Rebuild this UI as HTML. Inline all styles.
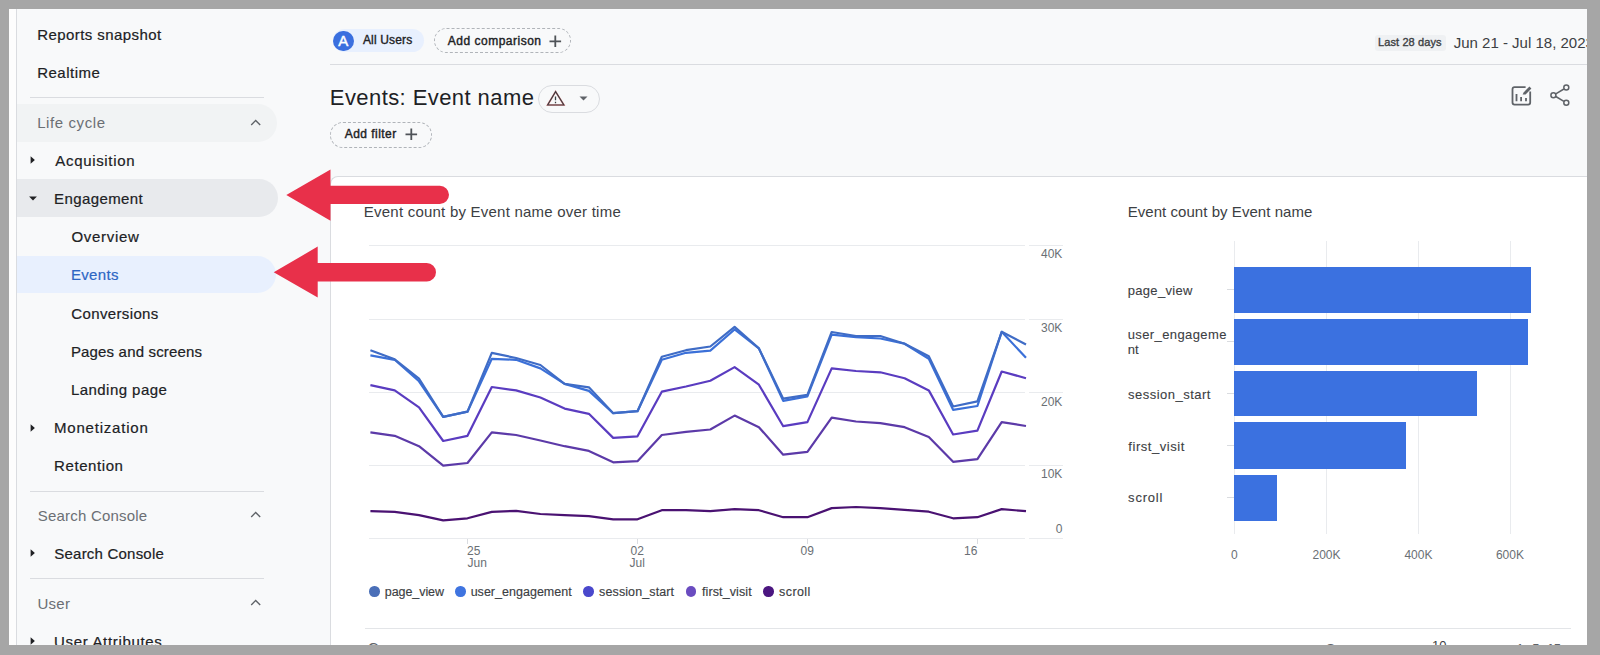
<!DOCTYPE html>
<html><head><meta charset="utf-8"><style>
html,body{margin:0;padding:0;}
body{width:1600px;height:655px;position:relative;overflow:hidden;background:#a6a6a6;font-family:"Liberation Sans",sans-serif;}
.t{position:absolute;line-height:1;white-space:nowrap;-webkit-font-smoothing:antialiased;}
.r{position:absolute;}
</style></head><body>
<div class="r" style="left:9.00px;top:9.00px;width:1578.00px;height:636.00px;background:#f8f9fa;"></div>
<div class="r" style="left:9.00px;top:9.00px;width:7.00px;height:636.00px;background:#fdfdfd;"></div>
<div class="r" style="left:16.00px;top:9.00px;width:1.00px;height:636.00px;background:#dadce0;"></div>
<div class="t" style="left:37.20px;top:26.50px;font-size:15px;color:#202124;font-weight:400;letter-spacing:0.43px;-webkit-text-stroke:0.2px #202124;">Reports snapshot</div>
<div class="t" style="left:37.20px;top:64.70px;font-size:15px;color:#202124;font-weight:400;letter-spacing:0.486px;-webkit-text-stroke:0.2px #202124;">Realtime</div>
<div class="r" style="left:30.00px;top:97.00px;width:234.00px;height:1.00px;background:#dadce0;"></div>
<div class="r" style="left:17.00px;top:104.00px;width:260.00px;height:38.00px;background:#f1f3f4;border-radius:0 19px 19px 0;"></div>
<div class="t" style="left:37.20px;top:115.00px;font-size:15px;color:#6b6f74;font-weight:400;letter-spacing:0.589px;">Life cycle</div>
<svg class="r" style="left:248.5px;top:117.5px" width="14" height="10" viewBox="0 0 14 10"><path d="M2.2 6.9 L6.7 2.4 L11.2 6.9" fill="none" stroke="#5f6368" stroke-width="1.4"/></svg>
<svg class="r" style="left:30.1px;top:154.7px" width="6" height="10" viewBox="0 0 6 10"><path d="M0.6 1.2 L4.9 5 L0.6 8.8Z" fill="#202124"/></svg>
<div class="t" style="left:55.30px;top:153.30px;font-size:15px;color:#202124;font-weight:400;letter-spacing:0.665px;-webkit-text-stroke:0.2px #202124;">Acquisition</div>
<div class="r" style="left:17.00px;top:179.30px;width:261.00px;height:37.70px;background:#e8eaed;border-radius:0 19px 19px 0;"></div>
<svg class="r" style="left:28.5px;top:196.2px" width="8" height="5" viewBox="0 0 8 5"><path d="M0.1 0.5 L7.9 0.5 L4 4.5Z" fill="#202124"/></svg>
<div class="t" style="left:54.10px;top:190.80px;font-size:15px;color:#202124;font-weight:400;letter-spacing:0.4px;-webkit-text-stroke:0.2px #202124;">Engagement</div>
<div class="t" style="left:71.50px;top:229.10px;font-size:15px;color:#202124;font-weight:400;letter-spacing:0.7px;-webkit-text-stroke:0.2px #202124;">Overview</div>
<div class="r" style="left:17.00px;top:256.30px;width:259.00px;height:37.10px;background:#e8f0fe;border-radius:0 19px 19px 0;"></div>
<div class="t" style="left:70.90px;top:267.40px;font-size:15px;color:#2d66c4;font-weight:400;letter-spacing:0.35px;-webkit-text-stroke:0.2px #2d66c4;">Events</div>
<div class="t" style="left:71.35px;top:305.90px;font-size:15px;color:#202124;font-weight:400;letter-spacing:0.36px;-webkit-text-stroke:0.2px #202124;">Conversions</div>
<div class="t" style="left:70.90px;top:343.50px;font-size:15px;color:#202124;font-weight:400;letter-spacing:0.172px;-webkit-text-stroke:0.2px #202124;">Pages and screens</div>
<div class="t" style="left:70.90px;top:381.60px;font-size:15px;color:#202124;font-weight:400;letter-spacing:0.459px;-webkit-text-stroke:0.2px #202124;">Landing page</div>
<svg class="r" style="left:30.1px;top:422.6px" width="6" height="10" viewBox="0 0 6 10"><path d="M0.6 1.2 L4.9 5 L0.6 8.8Z" fill="#202124"/></svg>
<div class="t" style="left:54.10px;top:419.70px;font-size:15px;color:#202124;font-weight:400;letter-spacing:0.782px;-webkit-text-stroke:0.2px #202124;">Monetization</div>
<div class="t" style="left:54.10px;top:457.80px;font-size:15px;color:#202124;font-weight:400;letter-spacing:0.581px;-webkit-text-stroke:0.2px #202124;">Retention</div>
<div class="r" style="left:30.00px;top:491.00px;width:234.00px;height:1.00px;background:#dadce0;"></div>
<div class="t" style="left:37.75px;top:507.90px;font-size:15px;color:#6b6f74;font-weight:400;letter-spacing:0.208px;">Search Console</div>
<svg class="r" style="left:248.5px;top:510.20000000000005px" width="14" height="10" viewBox="0 0 14 10"><path d="M2.2 6.9 L6.7 2.4 L11.2 6.9" fill="none" stroke="#5f6368" stroke-width="1.4"/></svg>
<svg class="r" style="left:30.1px;top:548.4px" width="6" height="10" viewBox="0 0 6 10"><path d="M0.6 1.2 L4.9 5 L0.6 8.8Z" fill="#202124"/></svg>
<div class="t" style="left:54.35px;top:546.10px;font-size:15px;color:#202124;font-weight:400;letter-spacing:0.208px;-webkit-text-stroke:0.2px #202124;">Search Console</div>
<div class="r" style="left:30.00px;top:578.00px;width:234.00px;height:1.00px;background:#dadce0;"></div>
<div class="t" style="left:37.45px;top:595.50px;font-size:15px;color:#6b6f74;font-weight:400;letter-spacing:0.283px;">User</div>
<svg class="r" style="left:248.5px;top:598.3px" width="14" height="10" viewBox="0 0 14 10"><path d="M2.2 6.9 L6.7 2.4 L11.2 6.9" fill="none" stroke="#5f6368" stroke-width="1.4"/></svg>
<svg class="r" style="left:30.1px;top:635.8px" width="6" height="10" viewBox="0 0 6 10"><path d="M0.6 1.2 L4.9 5 L0.6 8.8Z" fill="#202124"/></svg>
<div class="t" style="left:54.05px;top:633.50px;font-size:15px;color:#202124;font-weight:400;letter-spacing:0.671px;-webkit-text-stroke:0.2px #202124;">User Attributes</div>
<div class="r" style="left:333.00px;top:28.80px;width:91.00px;height:23.60px;background:#e8f0fe;border-radius:12px;"></div>
<div class="r" style="left:333.00px;top:30.60px;width:20.50px;height:20.50px;background:#3a6fdf;border-radius:50%;"></div>
<div class="t" style="left:143.25px;width:400px;text-align:center;top:33.00px;font-size:15px;color:#ffffff;font-weight:400;letter-spacing:0px;-webkit-text-stroke:0.45px #ffffff;">A</div>
<div class="t" style="left:362.90px;top:34.34px;font-size:12px;color:#202124;font-weight:400;letter-spacing:0.17px;-webkit-text-stroke:0.35px #202124;">All Users</div>
<div class="r" style="left:433.80px;top:28.40px;width:137.30px;height:24.80px;background:transparent;border:1px dashed #b0b4b9;border-radius:13px;box-sizing:border-box;"></div>
<div class="t" style="left:447.80px;top:34.84px;font-size:12px;color:#202124;font-weight:400;letter-spacing:0.498px;-webkit-text-stroke:0.4px #202124;">Add comparison</div>
<svg class="r" style="left:549.2px;top:34.6px" width="12.6" height="12.6" viewBox="0 0 12.6 12.6"><path d="M6.3 0.5 V12.1 M0.5 6.3 H12.1" stroke="#4f5358" stroke-width="1.8" fill="none"/></svg>
<div class="r" style="left:330.00px;top:64.00px;width:1257.00px;height:1.00px;background:#dadce0;"></div>
<div class="r" style="left:1375.20px;top:35.30px;width:70.40px;height:15.80px;background:#eff1f3;border-radius:3px;"></div>
<div class="t" style="left:1378.02px;top:36.99px;font-size:11px;color:#3c4043;font-weight:400;letter-spacing:0.104px;-webkit-text-stroke:0.35px #3c4043;">Last 28 days</div>
<div class="t" style="left:1453.75px;top:35.00px;font-size:15px;color:#3c4043;font-weight:400;letter-spacing:0.0px;">Jun 21 - Jul 18, 2023</div>
<div class="t" style="left:329.84px;top:87.28px;font-size:22px;color:#202124;font-weight:400;letter-spacing:0.421px;">Events: Event name</div>
<div class="r" style="left:538.00px;top:85.30px;width:62.30px;height:28.10px;background:transparent;border:1px solid #dadce0;border-radius:14px;box-sizing:border-box;"></div>
<svg class="r" style="left:545px;top:89px" width="22" height="19" viewBox="0 0 22 19"><path d="M10.6 2.6 L18.9 16 L2.6 16 Z" fill="none" stroke="#e05a5a" stroke-width="1.7" stroke-linejoin="miter" opacity="0.7"/><path d="M10.6 2.6 L18.9 16 L2.6 16 Z" fill="none" stroke="#3c3c40" stroke-width="1.1" stroke-linejoin="miter"/><path d="M10.5 7.5 V11.3 M10.5 12.8 V14.2" stroke="#3c4043" stroke-width="1.3"/></svg>
<svg class="r" style="left:579px;top:96px" width="9" height="5" viewBox="0 0 9 5"><path d="M0.5 0.5 L8.5 0.5 L4.5 4.5Z" fill="#5f6368"/></svg>
<div class="r" style="left:330.30px;top:121.90px;width:101.70px;height:26.20px;background:transparent;border:1px dashed #b0b4b9;border-radius:13px;box-sizing:border-box;"></div>
<div class="t" style="left:344.80px;top:128.24px;font-size:12px;color:#202124;font-weight:400;letter-spacing:0.449px;-webkit-text-stroke:0.4px #202124;">Add filter</div>
<svg class="r" style="left:405.09999999999997px;top:128.2px" width="12.6" height="12.6" viewBox="0 0 12.6 12.6"><path d="M6.3 0.5 V12.1 M0.5 6.3 H12.1" stroke="#4f5358" stroke-width="1.8" fill="none"/></svg>
<svg class="r" style="left:1508px;top:83px" width="28" height="26" viewBox="0 0 28 26"><path d="M17.6 4.2 H6.5 Q4.5 4.2 4.5 6.2 V19.6 Q4.5 21.6 6.5 21.6 H20.2 Q22.2 21.6 22.2 19.6 V8.5" fill="none" stroke="#5f6368" stroke-width="1.8"/><path d="M14.6 11.6 L15.6 9.4 L21.4 3.6 L23.4 5.6 L17.6 11.4 Z" fill="#5f6368"/><path d="M8.5 10.9 V18.3 M13.1 14 V18.3 M18 14.9 V18.3" stroke="#5f6368" stroke-width="1.8"/></svg>
<svg class="r" style="left:1547px;top:82px" width="26" height="26" viewBox="0 0 26 26"><path d="M8.8 11.9 L16.9 7 M8.8 14.5 L16.9 19.3" stroke="#5f6368" stroke-width="1.5"/><circle cx="19.3" cy="5.5" r="2.5" fill="none" stroke="#5f6368" stroke-width="1.5"/><circle cx="6.4" cy="13.2" r="2.5" fill="none" stroke="#5f6368" stroke-width="1.5"/><circle cx="19.3" cy="20.8" r="2.5" fill="none" stroke="#5f6368" stroke-width="1.5"/></svg>
<div class="r" style="left:330.00px;top:176.00px;width:1270.00px;height:479.00px;background:#ffffff;border-top:1px solid #dadce0;border-left:1px solid #dadce0;border-top-left-radius:8px;box-sizing:border-box;"></div>
<div class="t" style="left:363.80px;top:203.90px;font-size:15px;color:#3c4043;font-weight:400;letter-spacing:0.225px;">Event count by Event name over time</div>
<div class="r" style="left:369.00px;top:244.60px;width:656.00px;height:1.00px;background:#e9ebee;"></div>
<div class="r" style="left:1029.00px;top:244.60px;width:34.00px;height:1.00px;background:#e9ebee;"></div>
<div class="r" style="left:369.00px;top:318.50px;width:656.00px;height:1.00px;background:#e9ebee;"></div>
<div class="r" style="left:1029.00px;top:318.50px;width:34.00px;height:1.00px;background:#e9ebee;"></div>
<div class="r" style="left:369.00px;top:391.70px;width:656.00px;height:1.00px;background:#e9ebee;"></div>
<div class="r" style="left:1029.00px;top:391.70px;width:34.00px;height:1.00px;background:#e9ebee;"></div>
<div class="r" style="left:369.00px;top:464.80px;width:656.00px;height:1.00px;background:#e9ebee;"></div>
<div class="r" style="left:1029.00px;top:464.80px;width:34.00px;height:1.00px;background:#e9ebee;"></div>
<div class="r" style="left:369.00px;top:537.80px;width:656.00px;height:1.00px;background:#e9ebee;"></div>
<div class="r" style="left:1029.00px;top:537.80px;width:34.00px;height:1.00px;background:#e9ebee;"></div>
<div class="t" style="right:537.70px;top:248.34px;font-size:12px;color:#6a6f74;font-weight:400;letter-spacing:0px;">40K</div>
<div class="t" style="right:537.70px;top:322.34px;font-size:12px;color:#6a6f74;font-weight:400;letter-spacing:0px;">30K</div>
<div class="t" style="right:537.70px;top:395.54px;font-size:12px;color:#6a6f74;font-weight:400;letter-spacing:0px;">20K</div>
<div class="t" style="right:537.70px;top:467.64px;font-size:12px;color:#6a6f74;font-weight:400;letter-spacing:0px;">10K</div>
<div class="t" style="right:537.70px;top:523.44px;font-size:12px;color:#6a6f74;font-weight:400;letter-spacing:0px;">0</div>
<div class="r" style="left:467.10px;top:538.50px;width:1.00px;height:5.00px;background:#dadce0;"></div>
<div class="r" style="left:636.80px;top:538.50px;width:1.00px;height:5.00px;background:#dadce0;"></div>
<div class="r" style="left:806.90px;top:538.50px;width:1.00px;height:5.00px;background:#dadce0;"></div>
<div class="r" style="left:976.60px;top:538.50px;width:1.00px;height:5.00px;background:#dadce0;"></div>
<div class="t" style="left:467.10px;top:544.64px;font-size:12px;color:#6a6f74;font-weight:400;letter-spacing:0px;">25</div>
<div class="t" style="left:467.58px;top:557.24px;font-size:12px;color:#6a6f74;font-weight:400;letter-spacing:0px;">Jun</div>
<div class="t" style="left:437.20px;width:400px;text-align:center;top:544.64px;font-size:12px;color:#6a6f74;font-weight:400;letter-spacing:0px;">02</div>
<div class="t" style="left:437.20px;width:400px;text-align:center;top:557.24px;font-size:12px;color:#6a6f74;font-weight:400;letter-spacing:0px;">Jul</div>
<div class="t" style="left:607.30px;width:400px;text-align:center;top:544.64px;font-size:12px;color:#6a6f74;font-weight:400;letter-spacing:0px;">09</div>
<div class="t" style="right:622.70px;top:544.64px;font-size:12px;color:#6a6f74;font-weight:400;letter-spacing:0px;">16</div>
<svg class="r" style="left:0;top:0" width="1600" height="655" viewBox="0 0 1600 655"><polyline points="370.4,511.2 394.7,511.9 419.0,515.1 443.2,520.4 467.5,518.3 491.8,511.9 516.1,510.8 540.4,514.0 564.6,515.1 588.9,516.1 613.2,519.3 637.5,519.3 661.8,510.2 686.0,510.2 710.3,511.2 734.6,509.1 758.9,510.2 783.2,517.2 807.4,517.2 831.7,508.1 856.0,507.0 880.3,508.1 904.6,509.8 928.8,511.7 953.1,518.3 977.4,517.2 1001.7,509.1 1026.0,511.2" fill="none" stroke="#4a1272" stroke-width="2.2" stroke-linejoin="round"/><polyline points="370.4,432.4 394.7,435.8 419.0,446.2 443.2,465.6 467.5,463.0 491.8,432.4 516.1,435.0 540.4,440.5 564.6,446.2 588.9,450.9 613.2,462.3 637.5,461.2 661.8,435.0 686.0,431.9 710.3,429.5 734.6,415.6 758.9,427.2 783.2,454.7 807.4,451.9 831.7,417.7 856.0,421.5 880.3,423.1 904.6,427.2 928.8,437.1 953.1,461.8 977.4,459.2 1001.7,422.1 1026.0,426.0" fill="none" stroke="#5c3aa8" stroke-width="2.2" stroke-linejoin="round"/><polyline points="370.4,385.2 394.7,390.4 419.0,407.3 443.2,441.0 467.5,435.8 491.8,387.0 516.1,390.4 540.4,397.5 564.6,408.6 588.9,413.8 613.2,437.9 637.5,436.3 661.8,391.7 686.0,386.5 710.3,380.7 734.6,367.1 758.9,384.7 783.2,426.2 807.4,422.1 831.7,368.4 856.0,371.0 880.3,372.3 904.6,378.2 928.8,390.4 953.1,434.5 977.4,430.6 1001.7,371.5 1026.0,378.2" fill="none" stroke="#5a3cc0" stroke-width="2.2" stroke-linejoin="round"/><polyline points="370.4,355.4 394.7,359.8 419.0,381.3 443.2,416.9 467.5,411.7 491.8,358.8 516.1,359.8 540.4,368.4 564.6,383.9 588.9,390.9 613.2,413.2 637.5,411.2 661.8,359.8 686.0,352.8 710.3,350.6 734.6,329.5 758.9,348.4 783.2,400.8 807.4,396.4 831.7,334.6 856.0,337.2 880.3,338.5 904.6,343.7 928.8,358.8 953.1,409.9 977.4,406.0 1001.7,331.8 1026.0,357.8" fill="none" stroke="#3b70d8" stroke-width="2.2" stroke-linejoin="round"/><polyline points="370.4,350.2 394.7,359.3 419.0,378.7 443.2,416.9 467.5,411.7 491.8,352.8 516.1,358.0 540.4,365.0 564.6,383.9 588.9,387.3 613.2,413.2 637.5,411.2 661.8,356.7 686.0,350.2 710.3,346.5 734.6,326.9 758.9,348.4 783.2,398.7 807.4,394.8 831.7,332.0 856.0,336.0 880.3,336.0 904.6,343.7 928.8,356.2 953.1,406.5 977.4,401.3 1001.7,331.8 1026.0,344.4" fill="none" stroke="#3f6cc6" stroke-width="2.2" stroke-linejoin="round"/></svg>
<div class="r" style="left:369.30px;top:586.40px;width:10.40px;height:10.40px;background:#4a6fb8;border-radius:50%;"></div>
<div class="t" style="left:384.85px;top:585.62px;font-size:12.5px;color:#3c4043;font-weight:400;letter-spacing:-0.078px;-webkit-text-stroke:0.15px #3c4043;">page_view</div>
<div class="r" style="left:455.40px;top:586.40px;width:10.40px;height:10.40px;background:#3f74e0;border-radius:50%;"></div>
<div class="t" style="left:470.65px;top:585.62px;font-size:12.5px;color:#3c4043;font-weight:400;letter-spacing:0.023px;-webkit-text-stroke:0.15px #3c4043;">user_engagement</div>
<div class="r" style="left:583.20px;top:586.40px;width:10.40px;height:10.40px;background:#4a48cc;border-radius:50%;"></div>
<div class="t" style="left:599.12px;top:585.62px;font-size:12.5px;color:#3c4043;font-weight:400;letter-spacing:0.106px;-webkit-text-stroke:0.15px #3c4043;">session_start</div>
<div class="r" style="left:685.80px;top:586.40px;width:10.40px;height:10.40px;background:#6a4cc0;border-radius:50%;"></div>
<div class="t" style="left:701.98px;top:585.62px;font-size:12.5px;color:#3c4043;font-weight:400;letter-spacing:0.112px;-webkit-text-stroke:0.15px #3c4043;">first_visit</div>
<div class="r" style="left:763.20px;top:586.40px;width:10.40px;height:10.40px;background:#4b1680;border-radius:50%;"></div>
<div class="t" style="left:779.12px;top:585.62px;font-size:12.5px;color:#3c4043;font-weight:400;letter-spacing:0.4px;-webkit-text-stroke:0.15px #3c4043;">scroll</div>
<div class="r" style="left:364.50px;top:628.00px;width:1206.50px;height:1.00px;background:#e3e5e8;"></div>
<div class="t" style="left:367.85px;top:640.40px;font-size:15px;color:#5f6368;font-weight:400;letter-spacing:0px;">C</div>
<div class="t" style="left:1432.09px;top:639.10px;font-size:13px;color:#3c4043;font-weight:400;letter-spacing:0px;">10</div>
<div class="t" style="left:1326.35px;top:642.20px;font-size:13px;color:#5f6368;font-weight:400;letter-spacing:0px;">S</div>
<div class="t" style="left:1516.59px;top:641.50px;font-size:13px;color:#5f6368;font-weight:400;letter-spacing:-0.769px;">1 - 5 of 5</div>
<div class="t" style="left:1127.70px;top:203.90px;font-size:15px;color:#3c4043;font-weight:400;letter-spacing:0.05px;">Event count by Event name</div>
<div class="r" style="left:1233.70px;top:240.50px;width:1.00px;height:293.80px;background:#e9ebee;"></div>
<div class="r" style="left:1326.10px;top:240.50px;width:1.00px;height:293.80px;background:#e9ebee;"></div>
<div class="r" style="left:1418.10px;top:240.50px;width:1.00px;height:293.80px;background:#e9ebee;"></div>
<div class="r" style="left:1509.80px;top:240.50px;width:1.00px;height:293.80px;background:#e9ebee;"></div>
<div class="r" style="left:1234.20px;top:266.60px;width:296.80px;height:46.40px;background:#3b71e0;"></div>
<div class="r" style="left:1227.00px;top:289.30px;width:7.00px;height:1.00px;background:#dadce0;"></div>
<div class="r" style="left:1234.20px;top:318.90px;width:293.60px;height:45.70px;background:#3b71e0;"></div>
<div class="r" style="left:1227.00px;top:341.25px;width:7.00px;height:1.00px;background:#dadce0;"></div>
<div class="r" style="left:1234.20px;top:370.90px;width:242.70px;height:45.40px;background:#3b71e0;"></div>
<div class="r" style="left:1227.00px;top:393.10px;width:7.00px;height:1.00px;background:#dadce0;"></div>
<div class="r" style="left:1234.20px;top:422.20px;width:171.40px;height:46.70px;background:#3b71e0;"></div>
<div class="r" style="left:1227.00px;top:445.05px;width:7.00px;height:1.00px;background:#dadce0;"></div>
<div class="r" style="left:1234.20px;top:474.70px;width:42.50px;height:46.00px;background:#3b71e0;"></div>
<div class="r" style="left:1227.00px;top:497.20px;width:7.00px;height:1.00px;background:#dadce0;"></div>
<div class="t" style="left:1127.72px;top:283.50px;font-size:13px;color:#3c4043;font-weight:400;letter-spacing:0.314px;-webkit-text-stroke:0.1px #3c4043;">page_view</div>
<div class="t" style="left:1127.72px;top:328.30px;font-size:13px;color:#3c4043;font-weight:400;letter-spacing:0.395px;-webkit-text-stroke:0.1px #3c4043;">user_engageme</div>
<div class="t" style="left:1127.72px;top:342.80px;font-size:13px;color:#3c4043;font-weight:400;letter-spacing:0px;-webkit-text-stroke:0.1px #3c4043;">nt</div>
<div class="t" style="left:1128.11px;top:388.00px;font-size:13px;color:#3c4043;font-weight:400;letter-spacing:0.479px;-webkit-text-stroke:0.1px #3c4043;">session_start</div>
<div class="t" style="left:1128.37px;top:439.60px;font-size:13px;color:#3c4043;font-weight:400;letter-spacing:0.539px;-webkit-text-stroke:0.1px #3c4043;">first_visit</div>
<div class="t" style="left:1128.11px;top:491.00px;font-size:13px;color:#3c4043;font-weight:400;letter-spacing:0.776px;-webkit-text-stroke:0.1px #3c4043;">scroll</div>
<div class="t" style="left:1034.30px;width:400px;text-align:center;top:549.44px;font-size:12px;color:#6a6f74;font-weight:400;letter-spacing:0px;">0</div>
<div class="t" style="left:1126.50px;width:400px;text-align:center;top:549.44px;font-size:12px;color:#6a6f74;font-weight:400;letter-spacing:0px;">200K</div>
<div class="t" style="left:1218.40px;width:400px;text-align:center;top:549.44px;font-size:12px;color:#6a6f74;font-weight:400;letter-spacing:0px;">400K</div>
<div class="t" style="left:1309.90px;width:400px;text-align:center;top:549.44px;font-size:12px;color:#6a6f74;font-weight:400;letter-spacing:0px;">600K</div>
<svg class="r" style="left:0;top:0" width="1600" height="655" viewBox="0 0 1600 655"><path d="M286.3 195 L330.5 169.6 L330.5 185.7 L439.85 185.7 A9.150000000000006 9.150000000000006 0 0 1 439.85 204 L330.5 204 L330.5 220.7 Z" fill="#e8304a"/><path d="M273.7 272.3 L317.7 246.6 L317.7 263 L426.8 263 A9.199999999999989 9.199999999999989 0 0 1 426.8 281.4 L317.7 281.4 L317.7 297.5 Z" fill="#e8304a"/></svg>
<div class="r" style="left:0.00px;top:0.00px;width:1600.00px;height:9.00px;background:#a6a6a6;"></div>
<div class="r" style="left:0.00px;top:645.00px;width:1600.00px;height:10.00px;background:#a6a6a6;"></div>
<div class="r" style="left:0.00px;top:0.00px;width:9.00px;height:655.00px;background:#a6a6a6;"></div>
<div class="r" style="left:1587.00px;top:0.00px;width:13.00px;height:655.00px;background:#a6a6a6;"></div>
</body></html>
